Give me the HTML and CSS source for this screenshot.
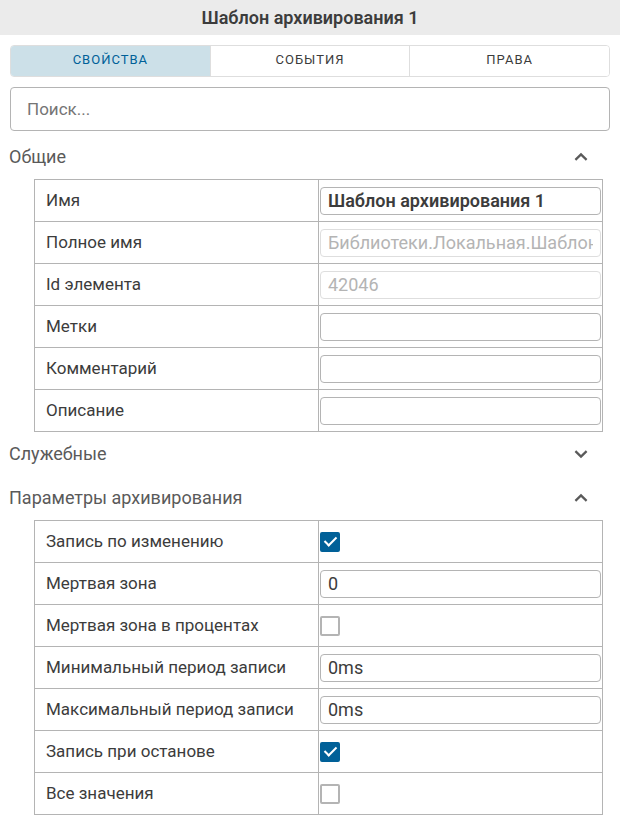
FILE: index.html
```
<!DOCTYPE html>
<html lang="ru">
<head>
    <meta charset="UTF-8">
    <meta name="viewport" content="width=device-width, initial-scale=1.0">
    <title>Шаблон архивирования 1</title>
    <link rel="stylesheet" href="styles.css">
</head>

<body>
    <header class="title-bar">
        <h1>Шаблон архивирования 1</h1>
    </header>

    <main class="panel">
        <div class="tabs" role="tablist">
            <button type="button" class="tab active" role="tab" aria-selected="true">Свойства</button>
            <button type="button" class="tab" role="tab" aria-selected="false">События</button>
            <button type="button" class="tab" role="tab" aria-selected="false">Права</button>
        </div>

        <input type="search" class="search" placeholder="Поиск..." aria-label="Поиск">

        <!-- Property groups -->
        <div class="groups">
            <details class="group" open>
                <summary>
                    <span>Общие</span>
                    <svg class="chevron" viewBox="0 0 14 14" aria-hidden="true"><path d="M1.4 4.2 7 9.6l5.6-5.4"/></svg>
                </summary>
                <table class="props">
                    <tr>
                        <th scope="row"><label for="name">Имя</label></th>
                        <td><input type="text" id="name" class="changed" value="Шаблон архивирования 1"></td>
                    </tr>
                    <tr>
                        <th scope="row"><label for="fullname">Полное имя</label></th>
                        <td><input type="text" id="fullname" value="Библиотеки.Локальная.Шаблоны" disabled></td>
                    </tr>
                    <tr>
                        <th scope="row"><label for="item-id">Id элемента</label></th>
                        <td><input type="text" id="item-id" value="42046" disabled></td>
                    </tr>
                    <tr>
                        <th scope="row"><label for="tags">Метки</label></th>
                        <td><input type="text" id="tags"></td>
                    </tr>
                    <tr>
                        <th scope="row"><label for="comment">Комментарий</label></th>
                        <td><input type="text" id="comment"></td>
                    </tr>
                    <tr>
                        <th scope="row"><label for="description">Описание</label></th>
                        <td><input type="text" id="description"></td>
                    </tr>
                </table>
            </details>

            <details class="group">
                <summary>
                    <span>Служебные</span>
                    <svg class="chevron" viewBox="0 0 14 14" aria-hidden="true"><path d="M1.4 4.2 7 9.6l5.6-5.4"/></svg>
                </summary>
            </details>

            <details class="group" open>
                <summary>
                    <span>Параметры архивирования</span>
                    <svg class="chevron" viewBox="0 0 14 14" aria-hidden="true"><path d="M1.4 4.2 7 9.6l5.6-5.4"/></svg>
                </summary>
                <table class="props">
                    <tr>
                        <th scope="row"><label for="on-change">Запись по изменению</label></th>
                        <td><input type="checkbox" id="on-change" checked></td>
                    </tr>
                    <tr>
                        <th scope="row"><label for="deadband">Мертвая зона</label></th>
                        <td><input type="text" id="deadband" value="0"></td>
                    </tr>
                    <tr>
                        <th scope="row"><label for="deadband-percent">Мертвая зона в процентах</label></th>
                        <td><input type="checkbox" id="deadband-percent"></td>
                    </tr>
                    <tr>
                        <th scope="row"><label for="min-period">Минимальный период записи</label></th>
                        <td><input type="text" id="min-period" value="0ms"></td>
                    </tr>
                    <tr>
                        <th scope="row"><label for="max-period">Максимальный период записи</label></th>
                        <td><input type="text" id="max-period" value="0ms"></td>
                    </tr>
                    <tr>
                        <th scope="row"><label for="on-stop">Запись при останове</label></th>
                        <td><input type="checkbox" id="on-stop" checked></td>
                    </tr>
                    <tr>
                        <th scope="row"><label for="all-values">Все значения</label></th>
                        <td><input type="checkbox" id="all-values"></td>
                    </tr>
                </table>
            </details>
        </div>
    </main>
</body>
</html>
```
FILE: styles.css
```
* {
    box-sizing: border-box;
}

body {
    margin: 0;
    font-family: Roboto, Arial, sans-serif;
    font-size: 18px;
    line-height: 24px;
    color: #3c3c3c;
    background-color: #ffffff;
}

input,
button {
    font-family: inherit;
    color: inherit;
}

.title-bar {
    padding: 6px 10px 5px;
    background-color: #ebebeb;
    text-align: center;
}

.title-bar h1 {
    margin: 0;
    font-size: 18px;
    font-weight: 600;
}

.panel {
    padding: 10px 10px 8px;
}

.tabs {
    display: flex;
    height: 32px;
    border: 1px solid #dedede;
    border-radius: 4px;
    overflow: hidden;
}

.tab {
    flex: 1;
    padding: 0 0 4px;
    border: none;
    border-left: 1px solid #dedede;
    background-color: #ffffff;
    font-size: 13px;
    letter-spacing: 1px;
    text-transform: uppercase;
    cursor: pointer;
}

.tab:first-child {
    border-left: none;
}

.tab.active {
    background-color: #cce0e8;
    color: #006098;
}

.search {
    display: block;
    width: 100%;
    height: 44px;
    margin-top: 10px;
    padding: 0 16px;
    border: 1px solid #b4b4b4;
    border-radius: 4px;
    background-color: #ffffff;
    font-size: 17px;
    appearance: none;
    outline: none;
}

.search::placeholder {
    color: #757575;
}

.groups {
    margin-top: 4px;
    padding-right: 7px;
}

.group summary {
    display: flex;
    align-items: center;
    justify-content: space-between;
    height: 44px;
    margin-left: -1px;
    padding-right: 15px;
    color: #5a5a5a;
    list-style: none;
    cursor: pointer;
}

.chevron {
    width: 14px;
    height: 14px;
    fill: none;
    stroke: #5a5a5a;
    stroke-width: 2.3;
}

.group[open] .chevron {
    transform: rotate(180deg);
}

.props {
    width: calc(100% - 24px);
    margin-left: 24px;
    border-collapse: collapse;
    table-layout: fixed;
}

.props th,
.props td {
    height: 42px;
    border: 1px solid #b4b4b4;
    vertical-align: middle;
}

.props th {
    padding: 0 11px 2px;
    font-size: 17px;
    font-weight: 400;
    text-align: left;
}

.props td {
    padding: 0 1px;
}

.props input {
    display: block;
    margin: 0;
}

.props input[type="text"] {
    width: 100%;
    height: 28px;
    padding: 0 7px;
    border: 1px solid #b4b4b4;
    border-radius: 4px;
    background-color: #ffffff;
    font-size: 18px;
}

.props input.changed {
    font-weight: 600;
}

.props input[type="text"]:disabled {
    border-color: #dedede;
    color: #b4b4b4;
}

.props input[type="checkbox"] {
    width: 20px;
    height: 20px;
    border: 2px solid #b4b4b4;
    border-radius: 2px;
    background-color: #ffffff;
    appearance: none;
}

.props input[type="checkbox"]:checked {
    display: flex;
    justify-content: center;
    border-color: #006098;
    background-color: #006098;
}

/* tick mark */
.props input[type="checkbox"]:checked::before {
    content: "";
    width: 5px;
    height: 10px;
    border: solid #ffffff;
    border-width: 0 2px 2px 0;
    transform: rotate(45deg);
}
```
